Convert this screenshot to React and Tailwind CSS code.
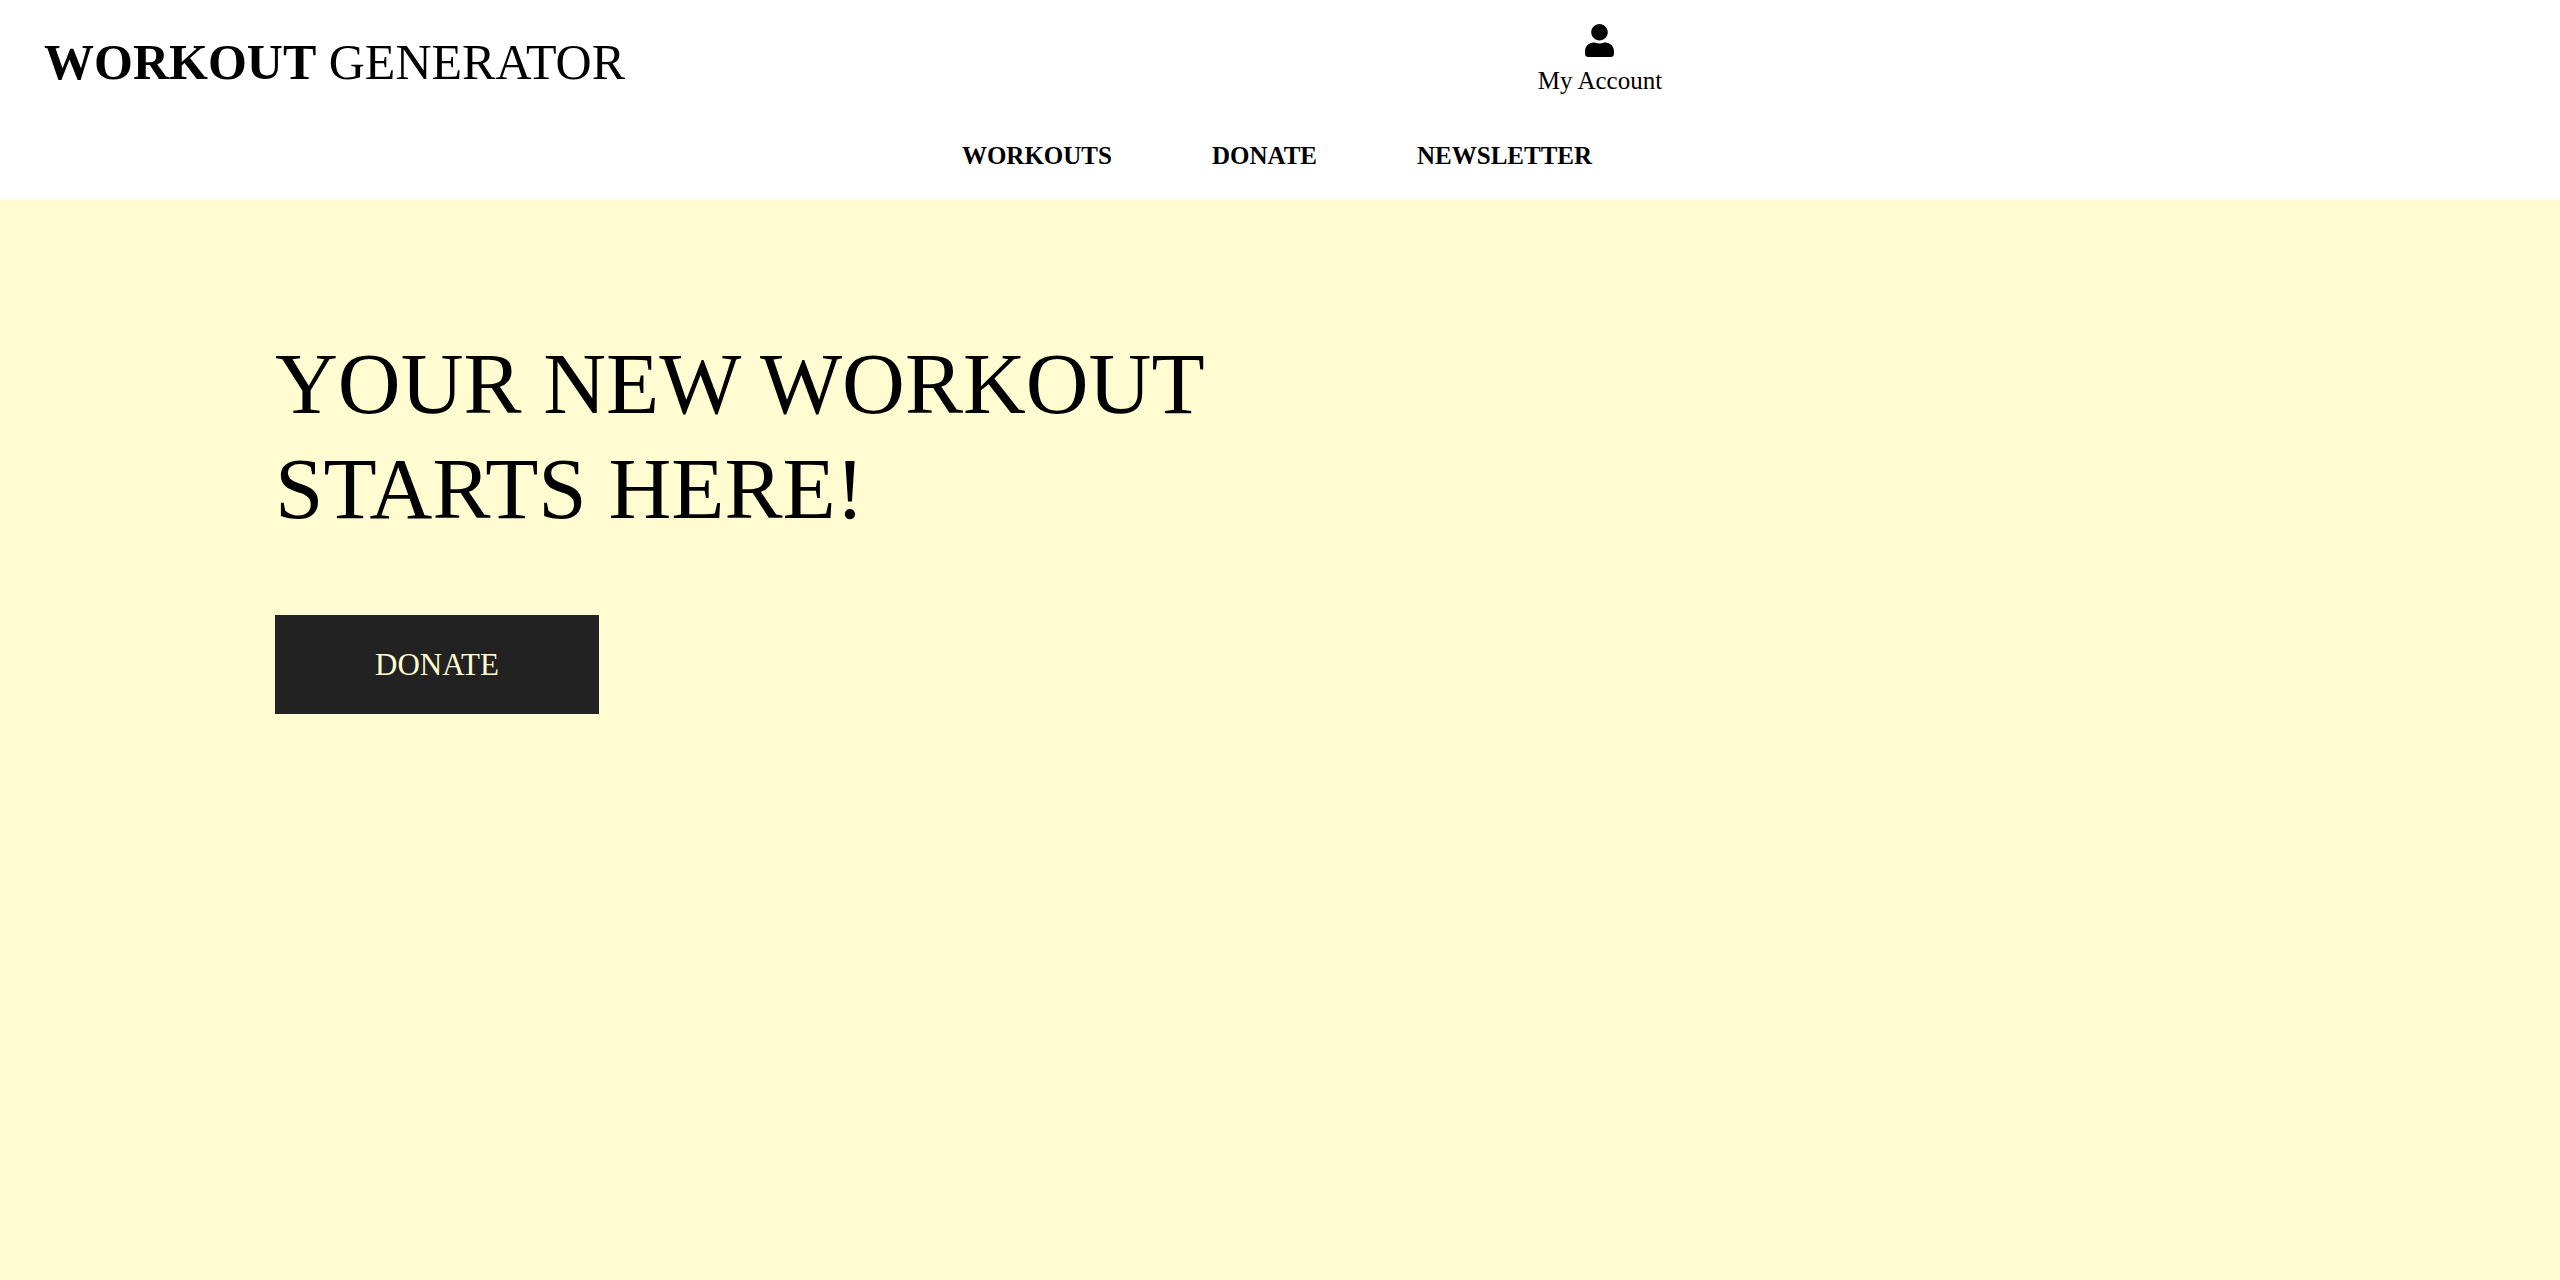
import { FaUser } from "react-icons/fa";

const links = ["Workouts", "Donate", "Newsletter"];

export default function App() {
  return (
    <div className="flex min-h-screen flex-col bg-[#fffcd1] font-['Liberation_Serif',serif] text-black">
      <header className="bg-white">
        <div className="grid h-28 grid-cols-4 items-start">
          <a href="#home" className="col-span-2 pl-11 pt-7 text-[50px] leading-[68px] uppercase">
            <strong>Workout</strong> Generator
          </a>
          <a href="#account" className="flex flex-col items-center justify-self-center pt-6 text-[25px] leading-8">
            <FaUser size={33} className="mb-2" />
            <span>My Account</span>
          </a>
        </div>
        <nav className="flex h-[87px] items-center justify-center gap-[100px] pr-1.5 text-[25px] font-bold uppercase">
          {links.map((l) => (
            <a key={l} href={"#" + l.toLowerCase()}>{l}</a>
          ))}
        </nav>
      </header>
      <main className="flex flex-1 flex-col items-start px-[275px] pt-[132px]">
        <h1 className="max-w-[1000px] text-[87px] leading-[105px] uppercase">Your new workout starts here!</h1>
        <button className="mt-[74px] bg-[#222] px-[100px] py-8 text-[31px] leading-[35px] text-[#fffcd1] uppercase">Donate</button>
      </main>
    </div>
  );
}
